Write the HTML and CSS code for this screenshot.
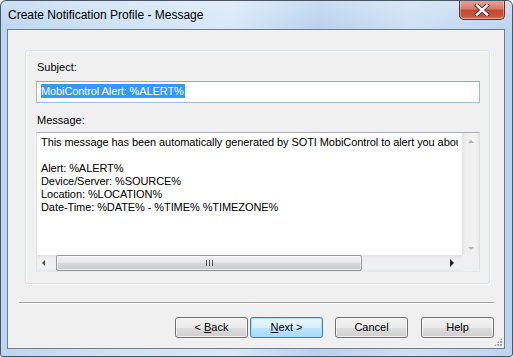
FILE: index.html
```html
<!DOCTYPE html>
<html>
<head>
<meta charset="utf-8">
<link rel="stylesheet" href="styles.css">
</head>
<body>
<div class="window">
  <div class="titlebar">
    <span class="title">Create Notification Profile - Message</span>
    <div class="close">
      <svg width="18" height="12" viewBox="0 0 18 12">
        <path d="M4 1.5 L14 10.5 M14 1.5 L4 10.5" stroke="#5a2a24" stroke-width="4.2" stroke-linecap="square"/>
        <path d="M4 1.5 L14 10.5 M14 1.5 L4 10.5" stroke="#ffffff" stroke-width="2.4" stroke-linecap="square"/>
      </svg>
    </div>
  </div>
  <div class="client">
    <div class="group">
      <div class="label">Subject:</div>
      <div class="input"><span class="sel">MobiControl Alert: %ALERT%</span></div>
      <div class="label label-msg">Message:</div>
      <div class="memo">
        <div class="memo-text">This message has been automatically generated by SOTI MobiControl to alert you about the following event:

Alert: %ALERT%
Device/Server: %SOURCE%
Location: %LOCATION%
Date-Time: %DATE% - %TIME% %TIMEZONE%</div>
        <div class="vscroll">
          <span class="arr arr-up"></span>
          <span class="arr arr-down"></span>
        </div>
        <div class="hscroll">
          <span class="arr arr-left"></span>
          <div class="hthumb"><span class="grip"></span></div>
          <span class="arr arr-right"></span>
        </div>
        <div class="corner"></div>
      </div>
    </div>
    <div class="sep"></div>
    <div class="buttons">
      <button class="btn btn-back">&lt; <u>B</u>ack</button>
      <button class="btn btn-default btn-next"><u>N</u>ext &gt;</button>
      <button class="btn btn-cancel">Cancel</button>
      <button class="btn btn-help">Help</button>
    </div>
    <div class="grip-corner"></div>
  </div>
</div>
</body>
</html>
```
FILE: styles.css
```css
* { box-sizing: border-box; }
html, body { margin: 0; padding: 0; background: #ffffff; }
body {
  font-family: "Liberation Sans", Arial, sans-serif;
  font-size: 11px;
  color: #000;
}
.window {
  width: 513px;
  height: 357px;
  border: 1px solid #4a5566;
  border-radius: 6px 6px 3px 3px;
  overflow: hidden;
  background: linear-gradient(to right, #bcd6f0 0%, #cde1f5 20%, #d8e8f8 45%, #b8d2ed 62%, #cde0f4 80%, #bcd5ef 100%);
  display: flex;
  flex-direction: column;
}
.titlebar {
  height: 28px;
  flex: none;
  display: flex;
  justify-content: space-between;
  align-items: flex-start;
  background: linear-gradient(to bottom, rgba(255,255,255,0.25), rgba(255,255,255,0));
}
.title {
  font-family: "Liberation Sans", Arial, sans-serif;
  font-size: 12px;
  color: #000;
  margin: 7px 0 0 7px;
  line-height: 15px;
}
.close {
  width: 46px;
  height: 20px;
  margin: -1px 7px 0 0;
  border: 1px solid #6b2c22;
  border-top: none;
  border-radius: 0 0 5px 5px;
  background: linear-gradient(to bottom, #e8a79b 0%, #d67c6c 45%, #c24a35 55%, #c9533d 85%, #d47a66 100%);
  box-shadow: inset 0 0 0 1px rgba(255,255,255,0.35);
  display: flex;
  align-items: center;
  justify-content: center;
}
.close svg { display: block; margin-top: 1px; }
.client {
  width: 498px;
  height: 320px;
  margin-left: 6px;
  border: 1px solid #6e7d90;
  background: #f0f0f0;
  position: relative;
  padding-top: 20px;
}
.group {
  width: 465px;
  height: 234px;
  margin-left: 17px;
  border: 1px solid #d5dfe5;
  border-radius: 3px;
  box-shadow: inset 1px 1px 0 #ffffff, 1px 1px 0 #ffffff;
  padding: 10px 9px 0 10px;
}
.label {
  line-height: 13px;
  height: 13px;
  padding-left: 1px;
}
.input {
  margin-top: 7px;
  height: 22px;
  border: 1px solid #a3bcd6;
  border-top-color: #8ea8c4;
  background: #ffffff;
  padding: 2px 0 0 4px;
  line-height: 14px;
  letter-spacing: -0.1px;
}
.sel {
  background: #3399ff;
  color: #ffffff;
  display: inline-block;
  line-height: 14px;
  padding-right: 1px;
}
.label-msg { margin-top: 11px; }
.memo {
  margin-top: 5px;
  height: 140px;
  border: 1px solid #abadb3;
  border-right-color: #dbdfe6;
  border-bottom-color: #e3e9ef;
  border-left-color: #e2e3ea;
  background: #ffffff;
  display: grid;
  grid-template-columns: 1fr 17px;
  grid-template-rows: 1fr 16px;
}
.memo-text {
  white-space: pre;
  overflow: hidden;
  padding: 3px 0 0 4px;
  margin-right: 4px;
  line-height: 13px;
  letter-spacing: -0.08px;
}
.vscroll {
  background: linear-gradient(to right, #e3e3e3, #eeeeee 20%, #f2f2f2 80%, #e8e8e8);
  display: flex;
  flex-direction: column;
  justify-content: space-between;
  align-items: center;
  padding: 7px 0 5px;
}
.hscroll {
  background: linear-gradient(to bottom, #e3e3e3, #eeeeee 20%, #f2f2f2 80%, #e8e8e8);
  display: flex;
  align-items: center;
  padding: 0 0 0 5px;
}
.corner { background: #f0f0f0; }
.arr { width: 0; height: 0; display: block; }
.arr-up { border-left: 3px solid transparent; border-right: 3px solid transparent; border-bottom: 3px solid #b4b4b4; }
.arr-down { border-left: 3px solid transparent; border-right: 3px solid transparent; border-top: 3px solid #b4b4b4; }
.arr-left { border-top: 3px solid transparent; border-bottom: 3px solid transparent; border-right: 3px solid #4d4d4d; }
.arr-right { border-top: 4px solid transparent; border-bottom: 4px solid transparent; border-left: 4px solid #222222; margin-left: 88px; }
.hthumb {
  width: 306px;
  height: 16px;
  margin-left: 11px;
  border: 1px solid #979797;
  border-radius: 2px;
  background: linear-gradient(to bottom, #f3f3f3 0%, #e8e8e8 45%, #d6d6d6 55%, #cccccc 100%);
  box-shadow: inset 0 0 0 1px rgba(255,255,255,0.6);
  display: flex;
  align-items: center;
  justify-content: center;
}
.grip {
  width: 7px;
  height: 6px;
  background: repeating-linear-gradient(to right, #555 0, #555 1px, transparent 1px, transparent 3px);
}
.sep {
  width: 475px;
  margin: 18px 0 0 11px;
  height: 2px;
  border-top: 1px solid #a0a0a0;
  border-bottom: 1px solid #ffffff;
}
.buttons {
  margin-top: 13px;
  display: flex;
  justify-content: flex-end;
  padding-right: 10px;
}
.btn {
  width: 73px;
  height: 21px;
  font-family: "Liberation Sans", Arial, sans-serif;
  font-size: 11px;
  color: #000;
  border: 1px solid #707070;
  border-radius: 3px;
  background: linear-gradient(to bottom, #f2f2f2 0%, #ebebeb 50%, #dddddd 51%, #cfcfcf 100%);
  box-shadow: inset 0 0 0 1px rgba(255,255,255,0.7);
  padding: 0;
  line-height: 17px;
}
.btn-next { margin-left: 2px; }
.btn-cancel { margin-left: 12px; }
.btn-help { margin-left: 13px; }
.btn-default {
  border-color: #3c7fb1;
  background: linear-gradient(to bottom, #eaf6fd 0%, #d9f0fc 50%, #bee6fd 51%, #a7d9f5 100%);
  box-shadow: inset 0 0 0 1px #a6e2f8;
}
.btn u { text-underline-offset: 1px; }
.grip-corner {
  position: absolute;
  right: 2px;
  bottom: 2px;
  width: 8px;
  height: 8px;
  background:
    radial-gradient(circle at 1px 1px, #a8a8a8 1px, transparent 1.2px) 0 0 / 3px 3px;
  clip-path: polygon(100% 0, 100% 100%, 0 100%);
}
```
